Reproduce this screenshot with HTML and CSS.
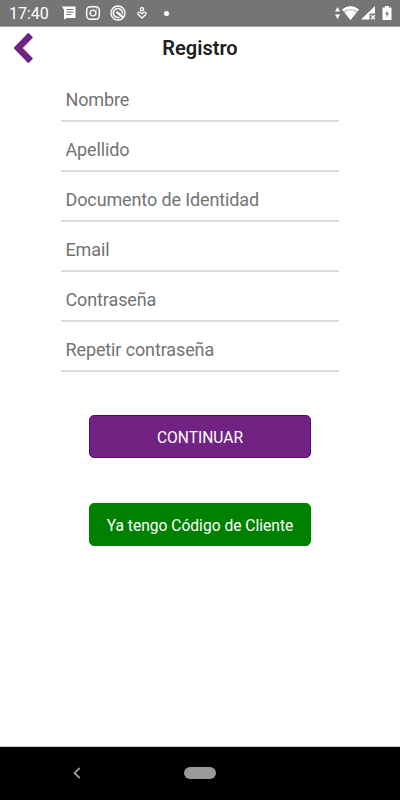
FILE: index.html
```
<!DOCTYPE html>
<html lang="es">
<head>
	<meta charset="UTF-8">
	<title>Registro</title>
	<link rel="stylesheet" href="styles.css">
</head>
<body>
<div class="status">
	<span class="time">17:40</span>
	<div class="notices">
		<svg width="14" height="14" viewBox="0 0 14 14"><path fill="#fff" d="M0 .5h13.500v11.500H5L2 13.500V4z"/><path stroke="#757575" stroke-width="1.200" d="M4.500 3.500h7M4.500 6h7M4.500 8.500h4.500"/></svg>
		<svg width="14" height="14" viewBox="0 0 14 14" fill="none" stroke="#fff" stroke-width="1.400"><rect x=".7" y=".7" width="12.600" height="12.600" rx="3.500"/><circle cx="7" cy="7" r="2.900"/><circle cx="10.700" cy="3.300" r=".3" stroke-width=".8"/></svg>
		<svg width="16" height="16" viewBox="0 0 16 16" fill="none" stroke="#fff"><circle cx="8" cy="8" r="7" stroke-width="1.400"/><path stroke-width="1.500" d="M9.500 12.300A4.600 4.600 0 1 1 12.400 9"/><path stroke-width="2.200" d="M6.500 6.800l6.500 5.400"/></svg>
		<svg class="heart" width="10" height="12" viewBox="0 0 10 12" fill="none" stroke="#fff" stroke-width="1.300"><circle cx="5" cy="2.200" r="1.600"/><path d="M5 11L1.300 7.600Q.2 6 1.700 5.200Q3.200 4.600 5 6.800Q6.800 4.600 8.300 5.200Q9.800 6 8.700 7.600z"/></svg>
		<i class="dot"></i>
	</div>
	<div class="signals">
		<svg width="5" height="12" viewBox="0 0 5 12"><path fill="#fff" d="M0 4.500L2.500 0L5 4.500zM0 7.500h5L2.500 12z"/></svg>
		<svg width="17" height="14" viewBox="0 0 17 14"><path fill="#fff" opacity=".55" d="M0 3.500Q8.500-3 17 3.500L8.500 14z"/><path fill="#fff" d="M0 3.500Q8.500-3 17 3.500L15.500 5.300Q8.500.6 1.500 5.300zM2.500 6.500Q8.500 2.200 14.500 6.500L8.500 13.900z"/></svg>
		<svg width="15" height="14" viewBox="0 0 15 14"><path fill="#fff" d="M14 0v7.500H8.500V13.500H0z"/><path stroke="#fff" stroke-width="1.300" d="M10 9.200l4 4M14 9.200l-4 4"/></svg>
		<svg width="10" height="14" viewBox="0 0 10 14"><path fill="#fff" d="M3 0h4v1.500h2q.5 0 .5.500v11.500q0 .5-.5.500H1q-.5 0-.5-.5V2q0-.5.500-.5h2z"/><path fill="#757575" d="M5.700 4L3 8.300h1.800L4.300 11.500L7 7.200H5.300z"/></svg>
	</div>
</div>
<div class="header">
	<a href="#" class="back"><svg width="22" height="32" viewBox="0 0 22 32"><path fill="#722282" stroke="#722282" stroke-width="1.600" stroke-linejoin="round" d="M15.300 1.800L19 5.500L8.600 16L19 26.500L15.300 30.200L1.600 16z"/></svg></a>
	<h1>Registro</h1>
</div>
<form class="registro">
	<input type="text" placeholder="Nombre">
	<input type="text" placeholder="Apellido">
	<input type="text" placeholder="Documento de Identidad">
	<input type="text" placeholder="Email">
	<input type="password" placeholder="Contraseña">
	<input type="password" placeholder="Repetir contraseña">
	<button type="button" class="btn continuar">CONTINUAR</button>
	<button type="button" class="btn cliente">Ya tengo Código de Cliente</button>
</form>
<div class="navbar">
	<svg width="8" height="12" viewBox="0 0 8 12"><path fill="none" stroke="#999" stroke-width="1.800" d="M6.700 1L1.500 6L6.700 11"/></svg>
	<span class="home"></span>
</div>
</body>
</html>
```

FILE: styles.css
```
*{
	margin:0;padding:0;box-sizing: border-box;
}
body{
	display: flex;flex-direction: column;height: 800px;background: #fff;overflow: hidden;
	font-family: Roboto, "Liberation Sans", sans-serif;
}
svg{display: block;flex: none;}
.status{
	display: flex;align-items: center;height: 27px;padding: 0 8px 0 9px;background: #757575;border-bottom: 1px solid #a0a0a0;color: #fff;
}
.time{width: 53px;padding-top: 1px;font-size: 16px;line-height: 27px;}
.notices{display: flex;align-items: center;gap: 10px;}
.heart{margin-left: 1px;}
.dot{width: 5px;height: 5px;margin-left: 7px;border-radius: 50%;background: #fff;}
.signals{display: flex;align-items: center;gap: 2px;margin-left: auto;}
.signals svg:last-child{margin-left: 4px;}
.header{
	display: grid;grid-template-columns: 61px 1fr 61px;align-items: center;height: 42px;
}
.back{padding-left: 13px;}
.header h1{font-size: 20px;font-weight: 600;text-align: center;color: #202020;}
.registro{display: flex;flex-direction: column;align-items: center;flex: 1;padding-top: 3px;}
.registro input{
	width: 278px;height: 50px;padding: 6px 4.5px 0;border: none;border-bottom: 2px solid #dcdcdc;outline: none;background: none;font-family: inherit;font-size: 18px;letter-spacing: -.12px;color: #333;
}
.registro input::placeholder{color: #737373;opacity: 1;}
.btn{
	width: 222px;height: 43px;padding-top: 2px;border-radius: 5px;font-family: inherit;font-size: 15.6px;color: #fff;
}
.continuar{margin-top: 43px;background: #722282;border: 1px solid #5a0870;}
.cliente{margin-top: 45px;background: #008000;border: 1px solid #008000;}
.navbar{
	display: grid;grid-template-columns: 1fr 32px 1fr;align-items: center;height: 54px;padding-bottom: 1px;background: #000;border-top: 1px solid #ccc;
}
.navbar svg{margin-left: 73px;}
.home{height: 12px;border-radius: 6px;background: #999;}
```
